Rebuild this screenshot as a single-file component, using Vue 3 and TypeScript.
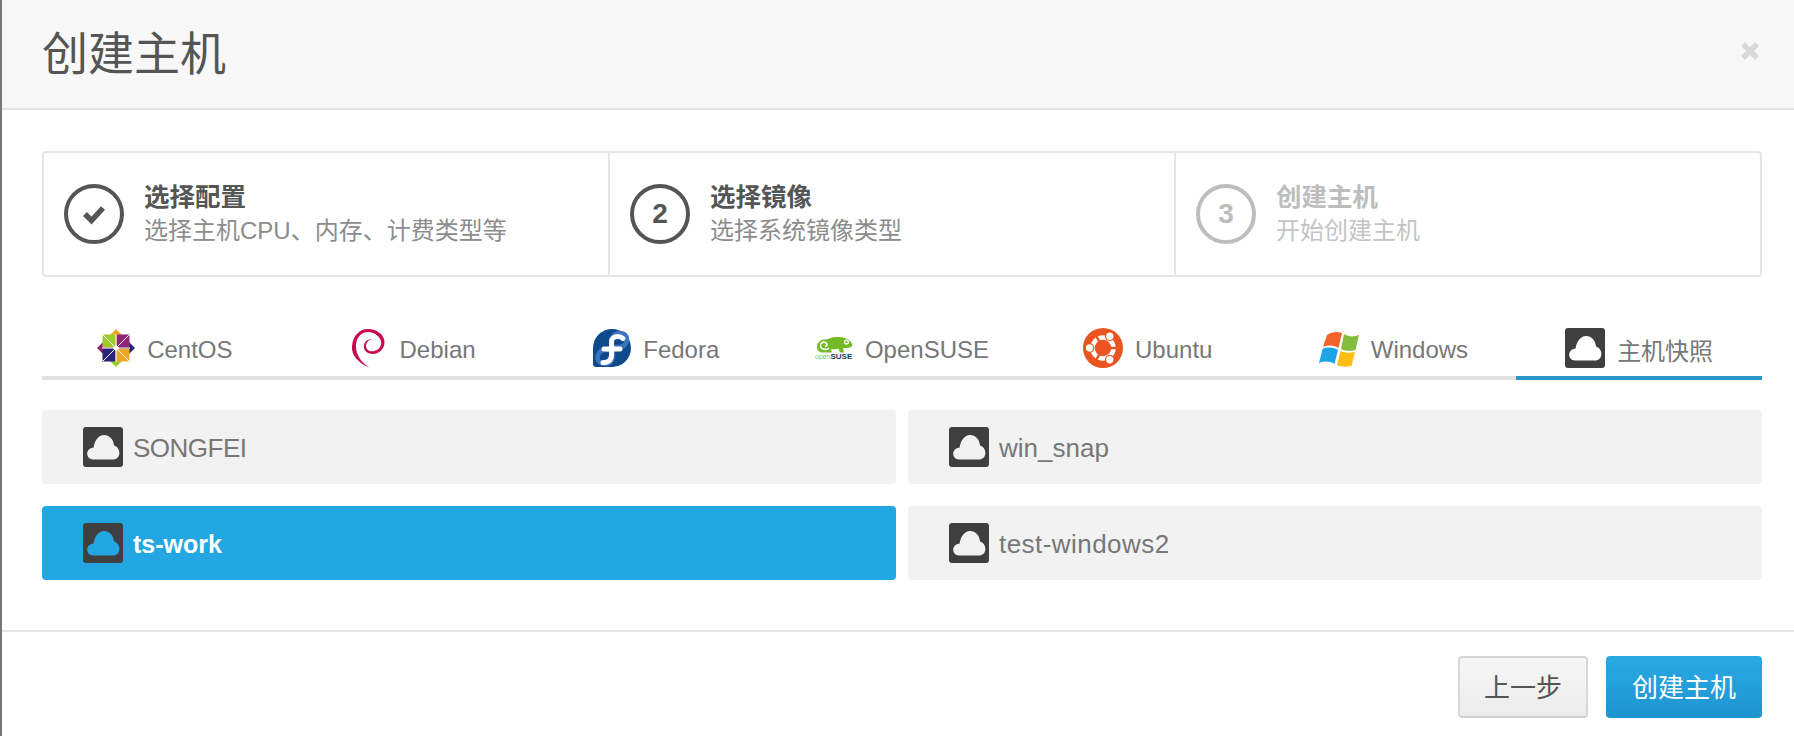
<script setup lang="ts">
interface Step { title: string; sub: string; mark: string; state: string }
const steps: Step[] = [
  { title: '选择配置', sub: '选择主机CPU、内存、计费类型等', mark: 'check', state: 'done' },
  { title: '选择镜像', sub: '选择系统镜像类型', mark: '2', state: 'current' },
  { title: '创建主机', sub: '开始创建主机', mark: '3', state: 'todo' }
]
const tabs = ['CentOS', 'Debian', 'Fedora', 'OpenSUSE', 'Ubuntu', 'Windows', '主机快照']
const options = [
  { name: 'SONGFEI', selected: false, spacing: -0.5 },
  { name: 'win_snap', selected: false, spacing: 0 },
  { name: 'ts-work', selected: true, spacing: 0 },
  { name: 'test-windows2', selected: false, spacing: 0.45 }
]
const cloud = 'M10 32.5C6.5 32.5 4.2 29.8 4.2 26.8C4.2 23.4 6.8 20.8 10.5 20.8C11.6 13.5 15.5 8 21 8C26.5 8 30.5 12.5 31 18.5C34.2 19.3 36.4 22.3 36.4 26C36.4 29.8 33.6 32.5 30 32.5Z'
</script>

<template>
  <div class="page">
    <header class="head">
      <h1 class="title">创建主机</h1>
      <svg class="close" width="20" height="20" viewBox="0 0 20 20">
        <path d="M3 3L17 17M17 3L3 17" stroke="#d9d9d9" stroke-width="5.5" fill="none" />
      </svg>
    </header>

    <main class="body">
      <div class="steps">
        <div v-for="s in steps" :key="s.title" class="step" :class="s.state">
          <div class="circle">
            <svg v-if="s.mark === 'check'" width="28" height="24" viewBox="0 0 28 24">
              <path d="M5 12L11.5 18.5L23 6" stroke="#555" stroke-width="5.5" fill="none" />
            </svg>
            <span v-else>{{ s.mark }}</span>
          </div>
          <div class="step-text">
            <div class="step-title">{{ s.title }}</div>
            <div class="step-sub">{{ s.sub }}</div>
          </div>
        </div>
      </div>

      <nav class="tabs">
        <div v-for="t in tabs" :key="t" class="tab" :class="{ active: t === '主机快照' }">
          <svg v-if="t === 'CentOS'" width="38" height="38" viewBox="0 0 38 38">
            <path d="M19 0L25 6H22V16H16V6H13Z" fill="#efa724" />
            <path d="M38 19L32 25V22H22V16H32V13Z" fill="#262577" />
            <path d="M19 38L13 32H16V22H22V32H25Z" fill="#9ccd2a" />
            <path d="M0 19L6 13V16H16V22H6V25Z" fill="#932279" />
            <rect x="5.5" y="5.5" width="13" height="13" fill="#9ccd2a" />
            <rect x="19.5" y="5.5" width="13" height="13" fill="#932279" />
            <rect x="5.5" y="19.5" width="13" height="13" fill="#262577" />
            <rect x="19.5" y="19.5" width="13" height="13" fill="#efa724" />
            <path d="M6 6L32 32M32 6L6 32M19 5V33M5 19H33" stroke="#fff" stroke-width="1" />
            <path d="M19 16L22 19L19 22L16 19Z" fill="#fff" />
          </svg>

          <svg v-else-if="t === 'Debian'" width="42" height="40" viewBox="-5 0 42 40">
            <path d="M18 39.5C8 35 0 28 1 18C2 7 9 1 17 1C26 1 33.5 7 33.5 14C33.5 21 28 26 22 26C16 26 12 22 13 17C14 13 17 11 21 11C17 12 15 15 15 18C15 22 19 24 23 23C28 22 31 18 30 13C28 7 22 4 17 4C10 4 5 10 5 18C5 27 10 34 18 39.5Z" fill="#c9094f" />
          </svg>

          <svg v-else-if="t === 'Fedora'" width="38" height="38" viewBox="0 0 38 38">
            <path d="M19 0A19 19 0 1 1 19 38H3Q0 38 0 35V19A19 19 0 0 1 19 0Z" fill="#0c4a8c" />
            <path d="M20 21H12C7 21 4.5 25 4.5 28.5C4.5 32.5 8 35 12 35C17 35 20 31 20 27ZM20 18H27C31 18 34 14 34 10.5C34 6.5 30.5 3.5 26 4C21 4.5 18 8 18 12" fill="none" stroke="#3c74bd" stroke-width="4.5" />
            <path d="M10 33.5C15 34 18.5 31 18.5 26V13C18.5 9.500 21.5 7.5 24.5 7.5C26.5 7.5 28.5 8 30 9.5M11 20H27" fill="none" stroke="#fff" stroke-width="5" stroke-linecap="round" />
          </svg>

          <svg v-else-if="t === 'OpenSUSE'" width="38" height="24" viewBox="0 0 38 24">
            <path d="M2 11C2 6 6 3.5 10 3.5C13 3.5 16 1 22 1C28 1 33 2 36 6L37.5 9C37 11 35 12 32 12L28 12L29 16.5L25 16.5L23.5 12.5C20 13.5 18 13.5 16 13L17 16.5L8 16.5C4 16.5 2 14 2 11Z" fill="#73ba25" />
            <path d="M14 12C11 14.5 6 13.5 5.5 10C5 7 8 5.5 10.5 6.5C12.5 7.5 12.5 10.5 10 10.5" fill="none" stroke="#fff" stroke-width="1.6" />
            <circle cx="31.5" cy="6" r="2.6" fill="#fff" />
            <circle cx="31.5" cy="6" r="1.2" fill="#73ba25" />
            <text x="0" y="23" class="suse-open">open</text>
            <text x="15.5" y="23" class="suse-name">SUSE</text>
          </svg>

          <svg v-else-if="t === 'Ubuntu'" width="40" height="40" viewBox="0 0 40 40">
            <circle cx="20" cy="20" r="20" fill="#e95420" />
            <circle cx="20" cy="20" r="10.5" fill="none" stroke="#fff" stroke-width="4.5" />
            <path d="M20 20L33 20M20 20L13.5 8.7M20 20L13.5 31.3" stroke="#e95420" stroke-width="2.4" />
            <circle cx="6.5" cy="20" r="4.3" fill="#fff" stroke="#e95420" stroke-width="1.2" />
            <circle cx="26.8" cy="8.2" r="4.3" fill="#fff" stroke="#e95420" stroke-width="1.2" />
            <circle cx="26.8" cy="31.8" r="4.3" fill="#fff" stroke="#e95420" stroke-width="1.2" />
          </svg>

          <svg v-else-if="t === 'Windows'" width="40" height="37" viewBox="0 0 40 37">
            <path d="M8 5C12 2 18 1 23 3L19.5 18C14 15 9 15 4 17Z" fill="#f2622a" />
            <path d="M25 4C30 7 35 7 40 5L36.5 20C31 21.5 26 21 22 19Z" fill="#84bc3b" />
            <path d="M3.5 19C8 17 14 17 19 20L15.5 34C10 31 5 31 0 33Z" fill="#1fa5e6" />
            <path d="M21.5 21C26 23 31 23 36 22L32.5 36C27 37 22 37 18 35Z" fill="#fdbd14" />
          </svg>

          <svg v-else width="40" height="40" viewBox="0 0 40 40">
            <rect width="40" height="40" rx="3" fill="#3f3f3f" />
            <path :d="cloud" fill="#fff" />
          </svg>
          <span class="tab-label">{{ t }}</span>
        </div>
      </nav>

      <div class="options">
        <div v-for="o in options" :key="o.name" class="option" :class="{ selected: o.selected }">
          <svg width="40" height="40" viewBox="0 0 40 40">
            <rect width="40" height="40" rx="3" fill="#3f3f3f" />
            <path :d="cloud" :fill="o.selected ? '#22a7e2' : '#f2f2f2'" />
          </svg>
          <span class="option-label" :style="{ letterSpacing: o.spacing + 'px' }">{{ o.name }}</span>
        </div>
      </div>
    </main>

    <footer class="foot">
      <button class="btn back">上一步</button>
      <button class="btn primary">创建主机</button>
    </footer>
  </div>
</template>

<style scoped>
.page {
  box-sizing: border-box;
  width: 1794px;
  height: 736px;
  overflow: hidden;
  background: #fff;
  border-left: 2px solid #777;
  font-family: "Liberation Sans", "Noto Sans CJK SC", sans-serif;
  color: #555;
}
.head {
  box-sizing: border-box;
  height: 110px;
  display: flex;
  align-items: center;
  justify-content: space-between;
  padding: 0 34px 0 40px;
  background: #f8f8f8;
  border-bottom: 2px solid #e5e5e5;
}
.title {
  margin: -8px 0 0;
  font-size: 46px;
  font-weight: 400;
  line-height: 1;
  color: #555;
  font-family: "Noto Sans CJK SC", sans-serif;
}
.close { margin-top: -6px; }
.body { padding: 41px 32px 50px 40px; }
.steps {
  box-sizing: border-box;
  display: grid;
  grid-template-columns: 566px 566px 1fr;
  height: 126px;
  border: 2px solid #e5e5e5;
  border-radius: 4px;
}
.step {
  display: flex;
  align-items: center;
  gap: 20px;
  padding-left: 20px;
  border-right: 2px solid #e5e5e5;
}
.step:last-child { border-right: 0; }
.circle {
  box-sizing: border-box;
  flex: none;
  width: 60px;
  height: 60px;
  display: flex;
  align-items: center;
  justify-content: center;
  border: 4px solid #555;
  border-radius: 50%;
  font-size: 28px;
  font-weight: 700;
  color: #555;
}
.step-title {
  font-size: 25.5px;
  line-height: 34px;
  font-weight: 700;
  color: #555;
}
.step-sub {
  font-size: 24px;
  line-height: 34px;
  color: #8c8c8c;
}
.todo .circle { border-color: #bdbdbd; color: #bdbdbd; }
.todo .step-title { color: #bdbdbd; }
.todo .step-sub { color: #c4c4c4; }
.tabs {
  display: grid;
  grid-template-columns: repeat(7, 1fr);
  margin-top: 41px;
  border-bottom: 4px solid #e2e2e2;
}
.tab {
  box-sizing: border-box;
  display: flex;
  align-items: center;
  justify-content: center;
  gap: 12px;
  height: 62px;
  padding-top: 2px;
  margin-bottom: -4px;
  border-bottom: 4px solid transparent;
  font-size: 24px;
  color: #777;
}
.tab-label { padding-top: 3px; }
.tab.active { border-bottom-color: #2a96c8; }
.suse-open { font-size: 7px; fill: #8cc63f; font-family: "Liberation Sans", sans-serif; }
.suse-name { font-size: 8px; font-weight: 700; fill: #173f4f; font-family: "Liberation Sans", sans-serif; }
.options {
  display: grid;
  grid-template-columns: 1fr 1fr;
  gap: 22px 12px;
  margin-top: 30px;
}
.option {
  display: flex;
  align-items: center;
  gap: 10px;
  height: 74px;
  padding-left: 41px;
  background: #f2f2f2;
  border-radius: 4px;
  font-size: 26px;
  color: #777;
}
.option-label { padding-top: 2px; }
.option.selected {
  background: #22a7e2;
  color: #fff;
  font-weight: 700;
  font-size: 25px;
}
.foot {
  box-sizing: border-box;
  height: 106px;
  display: flex;
  justify-content: flex-end;
  gap: 18px;
  padding: 24px 32px 0 0;
  border-top: 2px solid #e5e5e5;
}
.btn {
  box-sizing: border-box;
  height: 62px;
  border-radius: 4px;
  font-family: "Noto Sans CJK SC", sans-serif;
  font-size: 26px;
  padding: 0 0 4px;
}
.back {
  width: 130px;
  background: linear-gradient(#f6f6f6, #ececec);
  border: 2px solid #d8d8d8;
  border-bottom-color: #cfcfcf;
  color: #555;
}
.primary {
  width: 156px;
  background: linear-gradient(#29a9e4, #1f94cf);
  border: 0;
  color: #fff;
}
</style>

<style>
html, body { background: #fff; }
</style>
